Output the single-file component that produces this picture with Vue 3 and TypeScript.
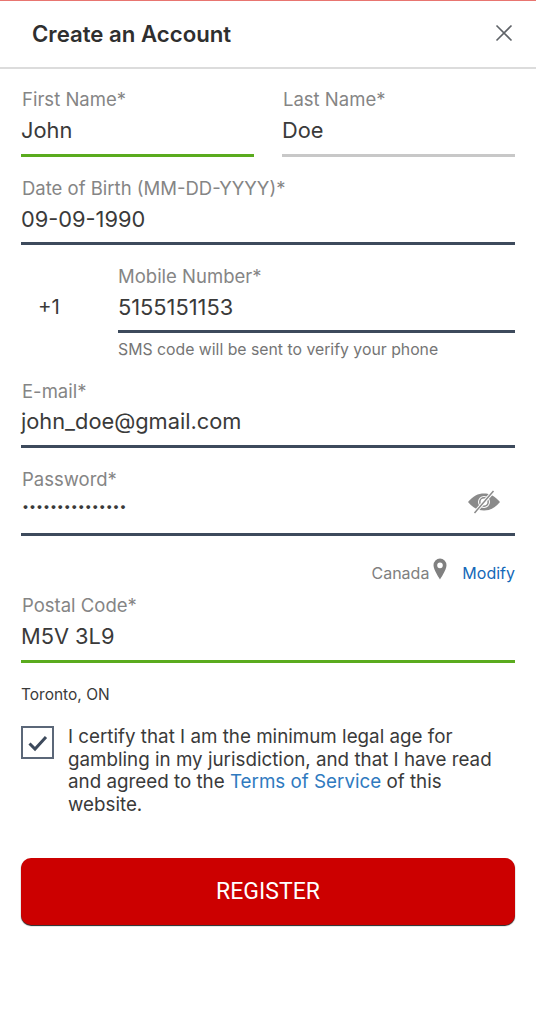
<script setup lang="ts">
const first = { label: 'First Name*', value: 'John' };
const last = { label: 'Last Name*', value: 'Doe' };
</script>

<template>
  <div class="page">
    <header class="head">
      <h1>Create an Account</h1>
      <svg class="close" width="20" height="20" viewBox="0 0 20 20" aria-label="Close">
        <path d="M2.5 2.5 17.5 17.5M17.5 2.5 2.5 17.5" fill="none" stroke="#5f6368" stroke-width="1.6" />
      </svg>
    </header>
    <form class="form" @submit.prevent>
      <div class="names">
        <div class="field green">
          <span class="label">{{ first.label }}</span>
          <span class="value">{{ first.value }}</span>
        </div>
        <div class="field grey">
          <span class="label">{{ last.label }}</span>
          <span class="value">{{ last.value }}</span>
        </div>
      </div>
      <div class="field dob">
        <span class="label">Date of Birth (MM-DD-YYYY)*</span>
        <span class="value">09-09-1990</span>
      </div>
      <div class="phone">
        <span class="code">+1</span>
        <div class="phone-col">
          <div class="field">
            <span class="label">Mobile Number*</span>
            <span class="value">5155151153</span>
          </div>
          <p class="hint">SMS code will be sent to verify your phone</p>
        </div>
      </div>
      <div class="field email">
        <span class="label">E-mail*</span>
        <span class="value">john_doe@gmail.com</span>
      </div>
      <div class="field pass">
        <span class="label">Password*</span>
        <span class="value dots">•••••••••••••••</span>
        <svg class="eye" width="34" height="24" viewBox="0 0 34 24" aria-label="Show password">
          <path fill-rule="evenodd" fill="#8a8a8a" d="M1 12C6 6 11 3.5 17 3.5S28 6 33 12c-5 6-10 8.500-16 8.500S6 18 1 12Zm16-6a6 6 0 1 0 0 12 6 6 0 0 0 0-12Z" />
          <circle cx="17" cy="12" r="4.200" fill="none" stroke="#8a8a8a" stroke-width="1.500" />
          <path d="M7.500 23 26.500 1" stroke="#fff" stroke-width="3.500" />
          <path d="M7.500 23 26.500 1" stroke="#8a8a8a" stroke-width="1.500" />
        </svg>
      </div>
      <div class="country">
        <span class="cname">Canada</span>
        <svg class="pin" width="14" height="22" viewBox="0 0 14 21" preserveAspectRatio="none" aria-hidden="true">
          <path fill-rule="evenodd" fill="#808080" d="M7 .5A6.500 6.500 0 0 0 .5 7c0 4.500 6.500 13.500 6.500 13.500S13.500 11.500 13.500 7A6.500 6.500 0 0 0 7 .5Zm0 3.700a2.800 2.800 0 1 1 0 5.600 2.800 2.800 0 0 1 0-5.600Z" />
        </svg>
        <a class="modify" href="#">Modify</a>
      </div>
      <div class="field green postal">
        <span class="label">Postal Code*</span>
        <span class="value">M5V 3L9</span>
      </div>
      <p class="city">Toronto, ON</p>
      <label class="cert">
        <span class="box">
          <svg width="26" height="22" viewBox="0 0 26 22" aria-hidden="true">
            <path d="M4.500 11.500 10 17 21 5" fill="none" stroke="#3d4a5c" stroke-width="3" />
          </svg>
        </span>
        <span class="cert-text">I certify that I am the minimum legal age for gambling in my jurisdiction, and that I have read and agreed to the <a href="#">Terms of Service</a> of this website.</span>
      </label>
      <button class="register" type="submit">REGISTER</button>
    </form>
  </div>
</template>

<style scoped>
.page {
  width: 536px;
  height: 1024px;
  box-sizing: border-box;
  background: #fff;
  border-top: 1px solid #e87570;
  font-family: Inter, "Liberation Sans", sans-serif;
  color: #3a3a3a;
  overflow: hidden;
}
.head {
  height: 68px;
  box-sizing: border-box;
  display: flex;
  align-items: center;
  justify-content: space-between;
  padding: 0 22px 2px 32px;
  border-bottom: 2px solid #dcdcdc;
}
h1 {
  margin: 0;
  font-size: 22.200px;
  font-weight: 600;
  color: #2f2f2f;
}
.form {
  display: flex;
  flex-direction: column;
  padding: 0 21px;
}
.names {
  display: grid;
  grid-template-columns: 233px 233px;
  column-gap: 28px;
}
.field {
  position: relative;
  display: flex;
  flex-direction: column;
  height: 68px;
  box-sizing: border-box;
  border-bottom: 3px solid #3d4a5c;
  padding-top: 20px;
}
.names .field { margin-top: 19px; height: 69px; }
.green { border-bottom-color: #5aab1e; }
.grey { border-bottom-color: #c8c8c8; }
.label {
  font-size: 18.500px;
  line-height: 22px;
  color: #858585;
  position: absolute;
  top: 0;
  left: 1px;
}
.value {
  font-size: 21.800px;
  line-height: 28px;
  color: #3a3a3a;
  padding-top: 8px;
}
.dob { margin-top: 20px; }
.phone {
  display: flex;
  margin-top: 20px;
}
.code {
  width: 97px;
  padding: 28px 0 0 17px;
  box-sizing: border-box;
  font-size: 20.500px;
  line-height: 28px;
}
.phone-col { flex: 1; }
.phone-col .label { left: 0; }
.hint {
  margin: 8px 0 0;
  font-size: 15.800px;
  line-height: 18px;
  color: #757575;
}
.email { margin-top: 21px; }
.email .value { padding-top: 7px; }
.pass { margin-top: 20px; }
.value.dots {
  font-size: 12.400px;
  letter-spacing: 0;
  padding-top: 5px;
  padding-left: 1px;
}
.eye {
  position: absolute;
  right: 14px;
  top: 22px;
}
.country {
  display: flex;
  align-items: flex-end;
  justify-content: flex-end;
  height: 25px;
  margin-top: 21px;
}
.cname {
  font-size: 16px;
  line-height: 18px;
  color: #808080;
  margin-right: 4px;
}
.pin { margin: 0 15px 2px 0; }
.modify {
  font-size: 16px;
  line-height: 18px;
  color: #1468b8;
  text-decoration: none;
}
.postal { margin-top: 12px; height: 69px; }
.city {
  margin: 23px 0 0;
  font-size: 15.500px;
  line-height: 18px;
  color: #3a3a3a;
}
.cert {
  display: flex;
  gap: 14px;
  margin-top: 22px;
}
.box {
  flex: none;
  width: 33px;
  height: 33px;
  box-sizing: border-box;
  border: 2px solid #5b6778;
  display: flex;
  align-items: center;
  justify-content: center;
}
.cert-text {
  font-size: 18.800px;
  line-height: 22.700px;
  color: #3a3a3a;
}
.cert-text a {
  color: #2f7abf;
  text-decoration: none;
}
.register {
  margin-top: 41px;
  height: 67px;
  border: 0;
  border-radius: 10px;
  background: #cc0000;
  box-shadow: 0 1px 1px #222;
  color: #fff;
  font-family: Roboto, "Liberation Sans", sans-serif;
  font-size: 23px;
  padding: 1px 0 0;
}
</style>
